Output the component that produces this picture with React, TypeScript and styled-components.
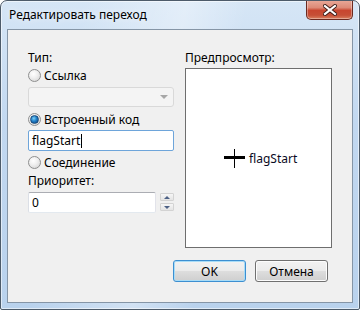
import React from "react";
import styled, { createGlobalStyle, css } from "styled-components";

const Global = createGlobalStyle`
  html, body { margin: 0; padding: 0; background: #ffffff; }
  body { font-family: "Noto Sans", "Open Sans", sans-serif; font-size: 12px; color: #000; }
  * { box-sizing: border-box; }
`;

const Window = styled.div`
  width: 360px;
  height: 310px;
  border: 1px solid #4d5b6a;
  border-radius: 7px 7px 2px 2px;
  background:
    linear-gradient(100deg, rgba(255,255,255,0) 20%, rgba(255,255,255,0.35) 45%, rgba(255,255,255,0) 60%),
    linear-gradient(180deg, #d6e6f6 0%, #c2d8f0 40%, #b9d2ed 100%);
  box-shadow: inset 0 0 0 1px rgba(255,255,255,0.55);
  display: flex;
  flex-direction: column;
  padding: 0 6px 6px 6px;
  overflow: hidden;
`;

const TitleBar = styled.div`
  height: 28px;
  display: flex;
  justify-content: space-between;
  align-items: flex-start;
`;

const Title = styled.div`
  padding: 6px 0 0 2px;
  font-size: 12px;
  line-height: 16px;
  color: #000;
  text-shadow: 0 0 6px rgba(255,255,255,0.9);
`;

const CloseButton = styled.div`
  margin-top: -1px;
  width: 47px;
  height: 20px;
  border: 1px solid #6b2a20;
  border-top: none;
  border-radius: 0 0 5px 5px;
  background: linear-gradient(180deg, #e9aa9a 0%, #dd8a77 40%, #c8462f 55%, #c64f36 80%, #d9805f 100%);
  box-shadow: inset 0 0 0 1px rgba(255,255,255,0.35);
  display: flex;
  align-items: center;
  justify-content: center;
`;

const Client = styled.div`
  flex: 1;
  border: 1px solid #8595a6;
  background: #f0f0f0;
  display: flex;
  flex-direction: column;
  padding: 20px 19px 0 20px;
`;

const Columns = styled.div`
  display: grid;
  grid-template-columns: 146px 147px;
  column-gap: 11px;
`;

const Column = styled.div`
  display: flex;
  flex-direction: column;
`;

const Label = styled.div<{ $mt?: number }>`
  height: 15px;
  line-height: 15px;
  margin-top: ${(p) => p.$mt ?? 0}px;
  white-space: nowrap;
`;

const RadioRow = styled.label<{ $mt: number }>`
  display: flex;
  align-items: center;
  gap: 3px;
  height: 15px;
  line-height: 15px;
  margin-top: ${(p) => p.$mt}px;
`;

const RadioCircle = styled.span<{ $checked?: boolean }>`
  width: 13px;
  height: 13px;
  border-radius: 50%;
  border: 1px solid #8e8f8f;
  background: radial-gradient(circle at 40% 35%, #ffffff 0%, #f0f0f0 40%, #cfcfcf 100%);
  display: flex;
  align-items: center;
  justify-content: center;
  ${(p) =>
    p.$checked &&
    css`
      &::after {
        content: "";
        width: 7px;
        height: 7px;
        border-radius: 50%;
        background: radial-gradient(circle at 40% 35%, #7fd1f8 0%, #1f7fc8 45%, #0e3f78 100%);
        border: 1px solid #1a4a7a;
      }
    `}
`;

const Combo = styled.div`
  margin-top: 4px;
  height: 20px;
  border: 1px solid #d9d9d9;
  border-radius: 3px;
  background: #f4f4f4;
  display: flex;
  justify-content: flex-end;
  align-items: center;
  padding-right: 5px;
`;

const ComboArrow = styled.span`
  width: 0;
  height: 0;
  border-left: 4px solid transparent;
  border-right: 4px solid transparent;
  border-top: 4px solid #a7a7a7;
`;

const TextBox = styled.div<{ $focused?: boolean; $mt: number; $width?: number }>`
  margin-top: ${(p) => p.$mt}px;
  height: 21px;
  width: ${(p) => (p.$width ? `${p.$width}px` : "auto")};
  background: #fff;
  border: 1px solid ${(p) => (p.$focused ? "#6ea5da" : "#abadb3")};
  ${(p) => !p.$focused && css`border-color: #abadb3 #e2e3ea #e3e9ef #dbdfe6;`}
  border-radius: 2px;
  padding-left: 3px;
  display: flex;
  align-items: center;
  line-height: 15px;
`;

const Caret = styled.span`
  display: inline-block;
  width: 1px;
  height: 14px;
  background: #000;
  margin-left: 1px;
`;

const SpinRow = styled.div`
  margin-top: 4px;
  display: flex;
  gap: 4px;
  align-items: flex-start;
`;

const SpinButtons = styled.div`
  display: flex;
  flex-direction: column;
  gap: 2px;
  margin-top: 1px;
`;

const SpinButton = styled.div<{ $down?: boolean }>`
  width: 14px;
  height: 8px;
  border: 1px solid #d3d3d3;
  border-radius: 1px;
  background: linear-gradient(180deg, #f6f6f6, #e4e4e4);
  display: flex;
  align-items: center;
  justify-content: center;
  &::after {
    content: "";
    border-left: 3px solid transparent;
    border-right: 3px solid transparent;
    ${(p) =>
      p.$down
        ? css`border-top: 3px solid #4d6185;`
        : css`border-bottom: 3px solid #4d6185;`}
  }
`;

const Preview = styled.div`
  margin-top: 3px;
  height: 180px;
  border: 1px solid #6e6e6e;
  background: #fff;
  display: flex;
  align-items: center;
  padding-left: 38px;
  gap: 4px;
`;

const PreviewText = styled.span`
  line-height: 15px;
  color: #0a0a1e;
  margin-top: 1px;
`;

const ButtonRow = styled.div`
  margin-top: 12px;
  margin-right: 5px;
  display: flex;
  justify-content: flex-end;
  gap: 9px;
`;

const Button = styled.div<{ $default?: boolean }>`
  width: 73px;
  height: 22px;
  border-radius: 3px;
  display: flex;
  align-items: center;
  justify-content: center;
  line-height: 15px;
  border: 1px solid ${(p) => (p.$default ? "#3c8fd1" : "#707070")};
  background: linear-gradient(180deg, #f2f2f2 0%, #ebebeb 48%, #dddddd 52%, #cfcfcf 100%);
  box-shadow: inset 0 0 0 1px ${(p) => (p.$default ? "#a8dcf7" : "#fcfcfc")};
`;

function Cross() {
  return (
    <svg width="21" height="19" viewBox="0 0 21 19">
      <rect x="0" y="7" width="21" height="3" fill="#000" />
      <rect x="10" y="0" width="1" height="19" fill="#000" />
    </svg>
  );
}

function CloseX() {
  return (
    <svg width="14" height="12" viewBox="0 0 14 12">
      <path d="M2 2 L12 10 M12 2 L2 10" stroke="#3b1a14" strokeWidth="4" strokeLinecap="square" />
      <path d="M2 2 L12 10 M12 2 L2 10" stroke="#ffffff" strokeWidth="2.2" strokeLinecap="square" />
    </svg>
  );
}

export default function App() {
  return (
    <>
      <Global />
      <Window>
        <TitleBar>
          <Title>Редактировать переход</Title>
          <CloseButton>
            <CloseX />
          </CloseButton>
        </TitleBar>
        <Client>
          <Columns>
            <Column>
              <Label>Тип:</Label>
              <RadioRow $mt={3}>
                <RadioCircle />
                Ссылка
              </RadioRow>
              <Combo>
                <ComboArrow />
              </Combo>
              <RadioRow $mt={5}>
                <RadioCircle $checked />
                Встроенный код
              </RadioRow>
              <TextBox $focused $mt={3}>
                flagStart
                <Caret />
              </TextBox>
              <RadioRow $mt={4}>
                <RadioCircle />
                Соединение
              </RadioRow>
              <Label $mt={3}>Приоритет:</Label>
              <SpinRow>
                <TextBox $mt={0} $width={128}>0</TextBox>
                <SpinButtons>
                  <SpinButton />
                  <SpinButton $down />
                </SpinButtons>
              </SpinRow>
            </Column>
            <Column>
              <Label>Предпросмотр:</Label>
              <Preview>
                <Cross />
                <PreviewText>flagStart</PreviewText>
              </Preview>
            </Column>
          </Columns>
          <ButtonRow>
            <Button $default>OK</Button>
            <Button>Отмена</Button>
          </ButtonRow>
        </Client>
      </Window>
    </>
  );
}
